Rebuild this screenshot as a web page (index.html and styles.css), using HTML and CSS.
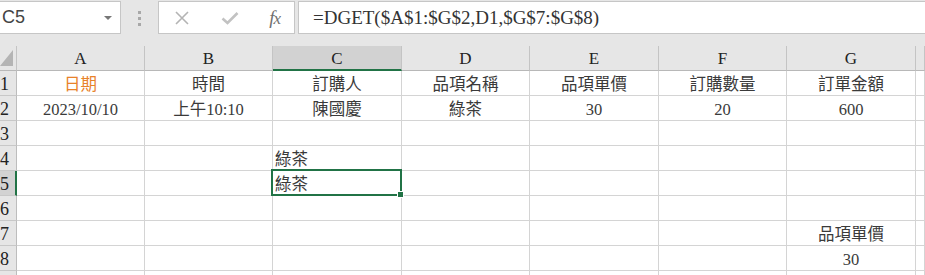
FILE: index.html
```html
<!DOCTYPE html>
<html lang="zh-Hant">
<head>
    <meta charset="UTF-8">
    <title>DGET</title>
<link rel="stylesheet" href="styles.css">
</head>
<body>
    <div class="formula-bar">
        <div class="name-box">
            <span class="name-text">C5</span>
            <span class="name-arrow"></span>
        </div>
        <div class="grip">
            <span></span><span></span><span></span>
        </div>
        <div class="fx-buttons">
            <svg class="fx-icon" width="16" height="16" viewBox="0 0 16 16">
                <path d="M2 2 L14 14 M14 2 L2 14" stroke="#b4b4b4" stroke-width="1.6" fill="none"/>
            </svg>
            <svg class="fx-icon" width="18" height="16" viewBox="0 0 18 16">
                <path d="M1.5 8.5 L6.5 13 L16.5 3" stroke="#c2c2c2" stroke-width="2.6" fill="none"/>
            </svg>
            <span class="fx-label">f<i>x</i></span>
        </div>
        <div class="formula-input">=DGET($A$1:$G$2,D1,$G$7:$G$8)</div>
    </div>

    <div class="sheet">
        <!-- column headers -->
        <div class="corner"><span class="corner-tri"></span></div>
        <div class="col-head">A</div>
        <div class="col-head">B</div>
        <div class="col-head active">C</div>
        <div class="col-head">D</div>
        <div class="col-head">E</div>
        <div class="col-head">F</div>
        <div class="col-head">G</div>
        <div class="col-head"></div>

        <!-- row 1 -->
        <div class="row-head">1</div>
        <div class="cell center orange">日期</div>
        <div class="cell center">時間</div>
        <div class="cell center">訂購人</div>
        <div class="cell center">品項名稱</div>
        <div class="cell center">品項單價</div>
        <div class="cell center">訂購數量</div>
        <div class="cell center">訂單金額</div>
        <div class="cell"></div>

        <!-- row 2 -->
        <div class="row-head">2</div>
        <div class="cell center">2023/10/10</div>
        <div class="cell center">上午10:10</div>
        <div class="cell center">陳國慶</div>
        <div class="cell center">綠茶</div>
        <div class="cell center">30</div>
        <div class="cell center">20</div>
        <div class="cell center">600</div>
        <div class="cell"></div>

        <!-- row 3 -->
        <div class="row-head">3</div>
        <div class="cell"></div><div class="cell"></div><div class="cell"></div><div class="cell"></div>
        <div class="cell"></div><div class="cell"></div><div class="cell"></div><div class="cell"></div>

        <!-- row 4 -->
        <div class="row-head">4</div>
        <div class="cell"></div>
        <div class="cell"></div>
        <div class="cell">綠茶</div>
        <div class="cell"></div><div class="cell"></div><div class="cell"></div><div class="cell"></div><div class="cell"></div>

        <!-- row 5 -->
        <div class="row-head active">5</div>
        <div class="cell"></div>
        <div class="cell"></div>
        <div class="cell selected">綠茶<span class="fill-handle"></span></div>
        <div class="cell"></div><div class="cell"></div><div class="cell"></div><div class="cell"></div><div class="cell"></div>

        <!-- row 6 -->
        <div class="row-head">6</div>
        <div class="cell"></div><div class="cell"></div><div class="cell"></div><div class="cell"></div>
        <div class="cell"></div><div class="cell"></div><div class="cell"></div><div class="cell"></div>

        <!-- row 7 -->
        <div class="row-head">7</div>
        <div class="cell"></div><div class="cell"></div><div class="cell"></div><div class="cell"></div>
        <div class="cell"></div><div class="cell"></div>
        <div class="cell center">品項單價</div>
        <div class="cell"></div>

        <!-- row 8 -->
        <div class="row-head">8</div>
        <div class="cell"></div><div class="cell"></div><div class="cell"></div><div class="cell"></div>
        <div class="cell"></div><div class="cell"></div>
        <div class="cell center">30</div>
        <div class="cell"></div>

        <!-- row 9 (only its top edge shows) -->
        <div class="row-head"></div>
        <div class="cell"></div><div class="cell"></div><div class="cell"></div><div class="cell"></div>
        <div class="cell"></div><div class="cell"></div><div class="cell"></div><div class="cell"></div>
    </div>
</body>
</html>
```

FILE: styles.css
```css
/* General Styles */
body {
    margin: 0;
    padding: 0;
    width: 925px;
    height: 275px;
    overflow: hidden;
    background-color: #e6e6e6;
    font-family: "Liberation Serif", "Noto Sans CJK TC", serif;
    color: #333333;
}

/* Formula bar */
.formula-bar {
    display: flex;
    align-items: flex-start;
    height: 34px;
    padding-top: 1px;
    box-sizing: border-box;
    margin-bottom: 12px;
}

.name-box {
    display: flex;
    align-items: center;
    justify-content: space-between;
    width: 121px;
    height: 33px;
    box-sizing: border-box;
    background-color: #ffffff;
    border: 1px solid #c6c6c6;
    border-left: none;
    padding: 0 8px 0 2px;
}

.name-text {
    font-family: "Liberation Sans", sans-serif;
    font-size: 18px;
    color: #444444;
}

.name-arrow {
    width: 0;
    height: 0;
    border-left: 4px solid transparent;
    border-right: 4px solid transparent;
    border-top: 4px solid #777777;
}

.grip {
    display: flex;
    flex-direction: column;
    gap: 3px;
    width: 37px;
    align-items: center;
    padding-top: 10px;
}

.grip span {
    width: 3px;
    height: 3px;
    background-color: #a8a8a8;
}

.fx-buttons {
    display: flex;
    align-items: center;
    justify-content: space-between;
    width: 137px;
    height: 33px;
    box-sizing: border-box;
    background-color: #ffffff;
    border: 1px solid #c6c6c6;
    padding: 0 14px 0 15px;
}

.fx-label {
    font-family: "Liberation Serif", serif;
    font-style: italic;
    font-size: 19px;
    color: #707070;
    letter-spacing: -1px;
}

.fx-label i {
    font-size: 17px;
}

.formula-input {
    flex: 1;
    height: 33px;
    box-sizing: border-box;
    margin-left: 3px;
    background-color: #ffffff;
    border: 1px solid #c6c6c6;
    border-right: none;
    padding-left: 14px;
    font-size: 19px;
    line-height: 31px;
    color: #333333;
    white-space: nowrap;
}

/* Sheet grid */
.sheet {
    display: grid;
    grid-template-columns: 17px 128px 128px 129px 128px 129px 128px 129px 1fr;
    grid-auto-rows: 25px;
    background-color: #ffffff;
}

.sheet > div {
    box-sizing: border-box;
    border-right: 1px solid #d4d4d4;
    border-bottom: 1px solid #d4d4d4;
    white-space: nowrap;
    overflow: visible;
}

.corner,
.col-head,
.row-head {
    background-color: #e6e6e6;
}

.sheet > .corner,
.sheet > .col-head {
    border-right-color: #c4c4c4;
    border-bottom-color: #b8b8b8;
}

.corner {
    position: relative;
}

.corner-tri {
    position: absolute;
    left: 0;
    top: 4px;
    width: 13px;
    height: 16px;
    background-color: #b4b4b4;
    clip-path: polygon(100% 0, 100% 100%, 0 100%);
}

.col-head {
    text-align: center;
    font-size: 17px;
    line-height: 22px;
    padding-top: 2px;
    color: #222222;
}

.col-head.active {
    background-color: #d2d2d2;
}

.sheet > .col-head.active {
    border-bottom: 2px solid #217346;
}

.row-head {
    overflow: hidden;
    text-align: right;
    padding-right: 8px;
    font-size: 18px;
    line-height: 22px;
    padding-top: 2px;
    color: #222222;
}

.sheet > .row-head {
    border-right-color: #bdbdbd;
    border-bottom-color: #c8c8c8;
}

.row-head.active {
    background-color: #d2d2d2;
}

.sheet > .row-head.active {
    border-right: 2px solid #217346;
}

.cell {
    font-size: 16.5px;
    line-height: 21px;
    padding: 3px 2px 0;
    color: #3a3a3a;
}

.center {
    text-align: center;
}

.orange {
    color: #e8822a;
}

/* Active cell */
.selected {
    position: relative;
}

.selected::after {
    content: "";
    position: absolute;
    left: -2px;
    top: -2px;
    right: -1px;
    bottom: -1px;
    border: 2px solid #217346;
}

.fill-handle {
    position: absolute;
    right: -3px;
    bottom: -3px;
    width: 5px;
    height: 5px;
    background-color: #217346;
    border: 1px solid #ffffff;
    z-index: 2;
}
```
